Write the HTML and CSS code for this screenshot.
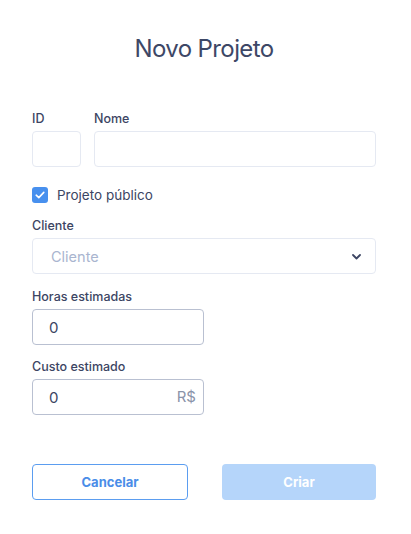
FILE: index.html
```html
<!DOCTYPE html>
<html lang="pt-BR">
<head>
    <meta charset="UTF-8">
    <meta name="viewport" content="width=device-width, initial-scale=1.0">
    <title>Novo Projeto</title>
    <link rel="stylesheet" href="styles.css">
</head>
<body>
    <div class="modal">
        <h1 class="title">Novo Projeto</h1>

        <form class="project-form">
            <div class="row">
                <div class="field field-id">
                    <label for="id">ID</label>
                    <input type="text" id="id" class="input">
                </div>
                <div class="field field-name">
                    <label for="nome">Nome</label>
                    <input type="text" id="nome" class="input">
                </div>
            </div>

            <label class="check">
                <span class="check-box">
                    <svg width="10" height="8" viewBox="0 0 10 8"><path d="M1.2 4.2 L3.8 6.6 L8.8 1.4" fill="none" stroke="#fff" stroke-width="1.6" stroke-linecap="round" stroke-linejoin="round"/></svg>
                </span>
                Projeto público
            </label>

            <div class="field field-client">
                <label>Cliente</label>
                <div class="select">
                    <span class="placeholder">Cliente</span>
                    <svg class="chevron" width="9" height="6" viewBox="0 0 9 6"><path d="M1 1 L4.5 4.5 L8 1" fill="none" stroke="#3c4563" stroke-width="1.8" stroke-linecap="round" stroke-linejoin="round"/></svg>
                </div>
            </div>

            <div class="field field-hours">
                <label for="horas">Horas estimadas</label>
                <input type="text" id="horas" class="input input-dark" value="0">
            </div>

            <div class="field field-cost">
                <label for="custo">Custo estimado</label>
                <div class="input-group">
                    <input type="text" id="custo" class="input input-dark" value="0">
                    <span class="suffix">R$</span>
                </div>
            </div>

            <div class="actions">
                <button type="button" class="btn btn-cancel">Cancelar</button>
                <button type="submit" class="btn btn-create">Criar</button>
            </div>
        </form>
    </div>
</body>
</html>
```

FILE: styles.css
```css
* {
    box-sizing: border-box;
}

body {
    font-family: Inter, "Noto Sans", sans-serif;
    background-color: #fff;
    color: #3c4563;
    margin: 0;
    padding: 0;
}

.modal {
    padding: 0 35px 0 32px;
}

.title {
    margin: 34px 0 0;
    font-size: 24px;
    line-height: 30px;
    font-weight: 400;
    text-align: center;
    color: #3d4766;
    letter-spacing: -0.6px;
}

.project-form {
    margin-top: 47px;
}

.row {
    display: flex;
    gap: 13px;
}

.field label {
    display: block;
    font-size: 12.5px;
    line-height: 16px;
    font-weight: 500;
    margin-bottom: 4px;
    color: #3c4563;
}

.field-id {
    width: 49px;
}

.field-name {
    flex: 1;
}

.input {
    display: block;
    width: 100%;
    height: 36px;
    padding: 0 16px;
    border: 1px solid #e5e9f2;
    border-radius: 4px;
    font-family: inherit;
    font-size: 15px;
    color: #3c4563;
    background: #fff;
    outline: none;
}

.input-dark {
    border-color: #b9c0d1;
}

.check {
    display: flex;
    align-items: center;
    gap: 9px;
    margin-top: 20px;
    height: 16px;
    font-size: 13.5px;
    color: #3c4563;
}

.check-box {
    width: 16px;
    height: 16px;
    border-radius: 3px;
    background-color: #4790ee;
    display: flex;
    align-items: center;
    justify-content: center;
}

.field-client {
    margin-top: 15px;
}

.select {
    height: 36px;
    border: 1px solid #e5e9f2;
    border-radius: 4px;
    display: flex;
    align-items: center;
    justify-content: space-between;
    padding: 0 14px 0 18px;
}

.placeholder {
    font-size: 14.5px;
    color: #a9b5cf;
}

.chevron {
    margin-top: 1px;
}

.field-hours {
    margin-top: 15px;
    width: 172px;
}

.field-cost {
    margin-top: 14px;
    width: 172px;
}

.input-group {
    position: relative;
}

.suffix {
    position: absolute;
    right: 8px;
    top: 0;
    line-height: 36px;
    font-size: 15px;
    color: #8a93a9;
}

.actions {
    margin-top: 49px;
    display: flex;
    gap: 34px;
}

.btn {
    flex: 1;
    height: 36px;
    border-radius: 4px;
    font-family: inherit;
    font-size: 13px;
    font-weight: 700;
    cursor: pointer;
}

.btn-cancel {
    background: #fff;
    border: 1px solid #5b9df0;
    color: #4a8de8;
}

.btn-create {
    background: #b5d5fa;
    border: none;
    color: #fff;
}
```
